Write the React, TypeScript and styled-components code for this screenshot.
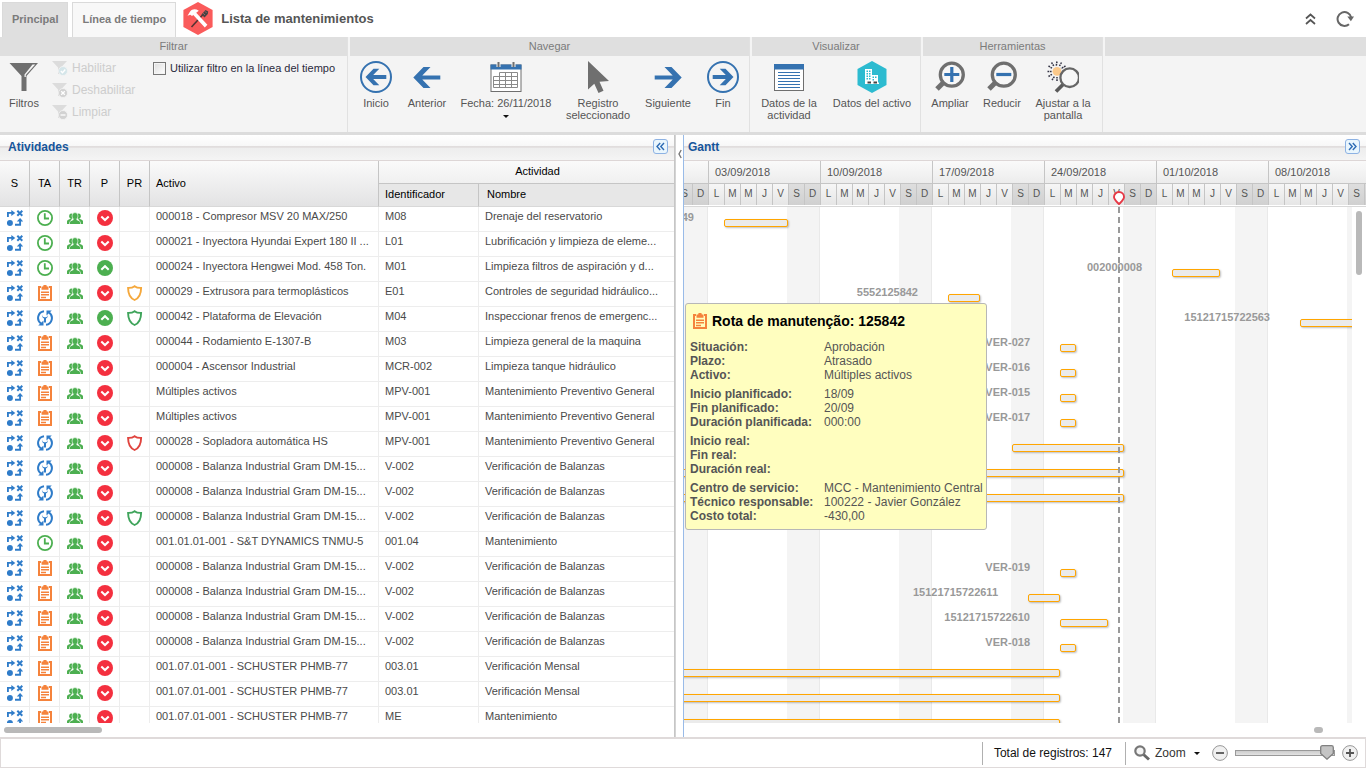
import React from "react";
import styled, { createGlobalStyle, css } from "styled-components";

const BLUE = "#3572b0";
const GREY = "#6f6f6f";
const DAY = 16;

const GlobalStyle = createGlobalStyle`
  *, *::before, *::after { box-sizing: border-box; }
  body {
    margin: 0;
    background: #fff;
    color: #444;
    font: 11px/12px "Liberation Sans", Arial, sans-serif;
  }
  button, input { font: inherit; color: inherit; margin: 0; }
  button { padding: 0; border: 0; background: none; cursor: pointer; }
  svg { display: block; flex: none; }
`;

/* ---------- page frame ---------- */

const Page = styled.div`
  display: flex;
  flex-direction: column;
  height: 100vh;
  overflow: hidden;
`;

const TopBar = styled.header`
  display: flex;
  align-items: flex-start;
  height: 37px;
  padding: 2px 12px 0 2px;
`;

const Tab = styled.button<{ $active?: boolean }>`
  height: 35px;
  margin-right: 4px;
  padding: 0 9px 2px;
  border: 1px solid #dadada;
  border-bottom: 0;
  background: ${(p) => (p.$active ? "#dfdfdf" : "#f8f8f8")};
  color: #7b7b7b;
  font-weight: bold;
`;

const PageTitle = styled.h1`
  display: flex;
  align-items: center;
  gap: 8px;
  height: 33px;
  margin: 0 auto 0 3px;
  color: #555;
  font-size: 13px;
  font-weight: bold;
`;

const TopActions = styled.div`
  display: flex;
  align-items: center;
  gap: 20px;
  height: 33px;
`;

/* ---------- ribbon ---------- */

const Ribbon = styled.div`
  display: flex;
  height: 98px;
  flex: none;
  border-bottom: 3px solid #dcdcdc;
  background: #f4f4f4;
`;

const Group = styled.section<{ $width?: number }>`
  display: flex;
  flex-direction: column;
  margin-right: ${(p) => (p.$width ? "2px" : "0")};
  border-right: ${(p) => (p.$width ? "1px solid #e1e1e1" : "0")};
  ${(p) => (p.$width ? css`flex: 0 0 ${p.$width}px;` : css`flex: 1;`)}
`;

const GroupTitle = styled.h2`
  height: 19px;
  margin: 0;
  background: #dfdfdf;
  color: #7b7b7b;
  font-size: 11px;
  font-weight: normal;
  line-height: 19px;
  text-align: center;
`;

const GroupBody = styled.div`
  display: flex;
  align-items: flex-start;
  padding-top: 1px;
`;

const Tool = styled.button<{ $width: number }>`
  display: flex;
  flex-direction: column;
  align-items: center;
  width: ${(p) => p.$width}px;
  padding-top: 4px;
  color: #555;
  text-align: center;
  line-height: 12px;
`;

const ToolLabel = styled.span`
  margin-top: 4px;
  white-space: pre;
`;

const Caret = styled.span`
  margin-top: 6px;
  border: 3px solid transparent;
  border-top-color: #111;
  border-bottom: 0;
`;

const FilterList = styled.div`
  display: flex;
  flex-direction: column;
  width: 105px;
  padding: 0 0 0 4px;
`;

const FilterOption = styled.button`
  display: flex;
  align-items: center;
  gap: 4px;
  height: 22px;
  color: #cdcdcd;
  font-size: 12px;
  cursor: default;
`;

const CheckLabel = styled.label`
  display: flex;
  align-items: center;
  gap: 4px;
  height: 22px;
  color: #2b2b3c;
`;

const CheckBox = styled.input`
  appearance: none;
  width: 13px;
  height: 13px;
  border: 1px solid #777;
  background: linear-gradient(135deg, #ddd, #fff);
  box-shadow: inset 0 0 0 1px #f4f4f4;
`;

/* ---------- panels ---------- */

const Workspace = styled.main`
  display: flex;
  flex: 1;
  min-height: 0;
`;

const Panel = styled.section<{ $share: number; $gantt?: boolean }>`
  position: relative;
  display: flex;
  flex-direction: column;
  flex: ${(p) => p.$share} 1 0;
  min-width: 0;
  border-right: ${(p) => (p.$gantt ? "0" : "1px solid #c6c6c6")};
  border-left: ${(p) => (p.$gantt ? "1px solid #99bbe8" : "0")};
`;

const PanelHeader = styled.div<{ $left: number }>`
  display: flex;
  justify-content: space-between;
  align-items: center;
  height: 26px;
  flex: none;
  padding: 0 6px 2px ${(p) => p.$left}px;
  border-bottom: 1px solid #ddd6d6;
  background: linear-gradient(#fff 0, #f7f7f7 11px, #dfdbdb 11px, #e6e3e3 13px, #ededed 13px, #f4f4f4 25px);
`;

const PanelTitle = styled.h2`
  margin: 0;
  color: #15559b;
  font-size: 12px;
  font-weight: bold;
`;

const FoldButton = styled.button`
  display: flex;
  align-items: center;
  justify-content: center;
  width: 15px;
  height: 15px;
  border: 1px solid #8db2e3;
  border-radius: 3px;
  background: #eaf6fd;
`;

const Splitter = styled.div`
  display: flex;
  flex: 0 0 8px;
  justify-content: flex-start;
  padding: 14px 0 0 2px;
  border-left: 1px solid #d4d4d4;
  background: #fff;
`;

const PanelBody = styled.div`
  flex: 1;
  min-height: 0;
  overflow: hidden;
`;

const ScrollTrack = styled.div<{ $end?: boolean }>`
  display: flex;
  justify-content: ${(p) => (p.$end ? "flex-end" : "flex-start")};
  height: 14px;
  flex: none;
  padding: 4px ${(p) => (p.$end ? "43px" : "4px")} 4px 4px;
`;

const ScrollThumb = styled.div<{ $w: number; $h: number }>`
  width: ${(p) => p.$w}px;
  height: ${(p) => p.$h}px;
  border-radius: 3px;
  background: #b9b9b9;
`;

/* ---------- activity table ---------- */

const Table = styled.table`
  width: 100%;
  table-layout: fixed;
  border-collapse: separate;
  border-spacing: 0;
`;

const HeadCell = styled.th<{ $kind?: "top" | "sub"; $left?: number; $last?: boolean }>`
  height: ${(p) => (p.$kind ? 23 : 46)}px;
  padding: 0 0 2px ${(p) => p.$left ?? 0}px;
  border-right: ${(p) => (p.$last ? "0" : "1px solid #c5c5c5")};
  border-bottom: 1px solid ${(p) => (p.$kind === "top" ? "#c5c5c5" : "#d8d8d8")};
  background: ${(p) =>
    p.$kind === "sub" ? "#e7e7e7" : p.$kind === "top" ? "linear-gradient(#fafafa, #f0f0f0)" : "linear-gradient(#fafafa, #e3e3e4)"};
  color: #000;
  font-weight: normal;
  text-align: ${(p) => (p.$left && p.$kind !== "top" ? "left" : "center")};
`;

const Row = styled.tr`
  height: 25px;
`;

const IconCell = styled.td`
  padding: 3px 0 0 7px;
  border-right: 1px solid #ededed;
  border-bottom: 1px solid #ededed;
  vertical-align: top;
`;

const TextCell = styled.td`
  padding: 3px 0 0 6px;
  border-right: 1px solid #ededed;
  border-bottom: 1px solid #ededed;
  color: #4a4a4a;
  overflow: hidden;
  vertical-align: top;
  white-space: nowrap;
  &:last-child { border-right: 0; }
`;

/* ---------- gantt ---------- */

const Scale = styled.div`
  flex: none;
  height: 46px;
  overflow: hidden;
  border-bottom: 1px solid #d8d8d8;
`;

const ScaleRow = styled.div`
  position: relative;
  display: flex;
  height: 23px;
  width: max-content;
  margin-left: -7px;
`;

const WeekCell = styled.div<{ $days: number }>`
  width: ${(p) => p.$days * DAY}px;
  padding: 5px 0 0 6px;
  border-right: 1px solid #c5c5c5;
  border-bottom: 1px solid #c5c5c5;
  background: linear-gradient(#fafafa, #ececec);
  color: #555;
`;

const DayCell = styled.div<{ $weekend: boolean }>`
  width: ${DAY}px;
  height: 21px;
  border-right: 1px solid #c5c5c5;
  background: ${(p) => (p.$weekend ? "linear-gradient(#dedede, #d0d0d0)" : "linear-gradient(#f6f6f6, #e6e6e6)")};
  color: #555;
  font-size: 10px;
  line-height: 20px;
  text-align: center;
`;

const TodayPin = styled.svg`
  position: absolute;
  top: 7px;
`;

const ChartArea = styled.div`
  display: flex;
  flex: 1;
  min-height: 0;
`;

const ChartClip = styled.div`
  flex: 1;
  min-width: 0;
  overflow: hidden;
`;

const Canvas = styled.div`
  position: relative;
  height: 100%;
  margin-left: -8px;
  background: repeating-linear-gradient(90deg, #f4f4f4 0 31px, #e9e9e9 31px 32px, #fff 32px 111px, #f4f4f4 111px 112px);
`;

const Lane = styled.div`
  position: relative;
  height: 25px;
`;

const Bar = styled.div`
  position: absolute;
  top: 12px;
  height: 8px;
  border: 1px solid #ffa500;
  border-radius: 2px;
  background: #ebebeb;
  box-shadow: 1px 1px 2px rgba(0, 0, 0, 0.25);
`;

const BarLabel = styled.span`
  position: absolute;
  top: -9px;
  right: 100%;
  margin-right: 31px;
  color: #999;
  font-weight: bold;
  white-space: nowrap;
`;

const TodayLine = styled.div`
  position: absolute;
  top: 0;
  bottom: 0;
  width: 2px;
  background: repeating-linear-gradient(#999 0 6px, transparent 6px 10px);
`;

const SideScroll = styled.div`
  flex: 0 0 14px;
  padding: 4px;
`;

const Tooltip = styled.div`
  position: absolute;
  top: 168px;
  left: 1px;
  width: 302px;
  height: 227px;
  padding: 9px 0 0 4px;
  border: 1px solid #b7b7b7;
  border-radius: 3px;
  background: #fffebf;
  font-size: 12px;
  line-height: 14px;
`;

const TooltipTitle = styled.h3`
  display: flex;
  align-items: center;
  gap: 4px;
  height: 16px;
  margin: 0 0 11px 2px;
  color: #000;
  font-size: 14px;
`;

const Facts = styled.dl`
  display: grid;
  grid-template-columns: 134px 1fr;
  margin: 0 0 5px;
  color: #555;
  white-space: nowrap;
  dt { font-weight: bold; }
  dd { margin: 0; }
`;

/* ---------- status bar ---------- */

const StatusBar = styled.footer`
  display: flex;
  flex: none;
  align-items: center;
  justify-content: flex-end;
  height: 31px;
  padding-right: 7px;
  border: 1px solid #dfdada;
  border-top-width: 2px;
  color: #111;
  font-size: 12px;
`;

const StatusBlock = styled.div`
  display: flex;
  align-items: center;
  height: 23px;
  padding: 0 13px 0 11px;
  border-left: 1px solid #b0b0b0;
`;

const ZoomBlock = styled(StatusBlock)`
  padding: 0 0 0 8px;
`;

const ZoomMenu = styled.button`
  display: flex;
  align-items: center;
  gap: 5px;
  width: 78px;
  color: #333;
`;

const ZoomCaret = styled.span`
  margin-left: 3px;
  border: 3px solid transparent;
  border-top-color: #111;
  border-bottom: 0;
`;

const Slider = styled.input`
  appearance: none;
  width: 100px;
  height: 16px;
  margin: 0 7px;
  background: none;
  &::-webkit-slider-runnable-track {
    height: 6px;
    border: 1px solid #999;
    background: linear-gradient(#ccc, #e2e2e2);
  }
  &::-webkit-slider-thumb {
    appearance: none;
    width: 14px;
    height: 15px;
    margin-top: -6px;
    background: url("data:image/svg+xml,%3Csvg xmlns='http://www.w3.org/2000/svg' viewBox='0 0 14 15'%3E%3Cpath d='M2.5.7h9q1.8 0 1.8 1.8v6L7 14.2.7 8.500v-6Q.7.7 2.500.7z' fill='%23c4c4c4' stroke='%23808080' stroke-width='1.300'/%3E%3C/svg%3E") no-repeat;
  }
`;

/* ---------- icons ---------- */

const FlowIcon = () => (
  <svg width="16" height="16" viewBox="0 0 16 16" fill="none" stroke="#2f7cc9" strokeWidth="1.9">
    <path d="M.9 7V2.900H5" />
    <path d="M4.300 0l4 2.900-4 3z" fill="#2f7cc9" stroke="none" />
    <path d="M10.300 .8l5 5M15.300 .8l-5 5" strokeWidth="2" />
    <circle cx="2.900" cy="13" r="3" fill="#2f7cc9" stroke="none" />
    <path d="M8 14.700h5.100V11" />
    <path d="M9.800 11.600l3.300-3.700 3.100 3.700z" fill="#2f7cc9" stroke="none" />
  </svg>
);

const ClockIcon = () => (
  <svg width="16" height="16" viewBox="0 0 16 16" fill="none" stroke="#4caf50">
    <circle cx="8" cy="8" r="7.100" strokeWidth="1.800" />
    <path d="M7.800 3.200v5.300h4.200" strokeWidth="1.800" />
  </svg>
);

const ClipboardIcon = () => (
  <svg width="16" height="16" viewBox="0 0 16 16" fill="none" stroke="#f5833c">
    <path d="M4 2H2v13h12V2h-2" strokeWidth="2" />
    <path d="M4.500 1.500h1.700a1.800 1.800 0 0 1 3.600 0h1.700v3.300h-7z" fill="#f5833c" stroke="none" />
    <path d="M4 7.200h8M4 9.800h8M4 12.400h5" strokeWidth="1.500" />
  </svg>
);

const ServiceIcon = () => (
  <svg width="16" height="16" viewBox="0 0 16 16" fill="none" stroke="#2f7cc9" strokeWidth="2">
    <path d="M7 1.200A6.800 6.800 0 0 0 4 13.500" />
    <path d="M9 14.800A6.800 6.800 0 0 0 12 2.500" />
    <path d="M1.200 15.600h5.300v-5.200z" fill="#2f7cc9" stroke="none" />
    <path d="M14.800.4H9.500v5.200z" fill="#2f7cc9" stroke="none" />
    <path d="M5.200 4.300c-.9 2 .3 3.600 1.800 4.100v4.200h2V8.400c1.500-.5 2.700-2.100 1.800-4.100v2L9 7.300H7L5.200 6.300z" fill="#2f7cc9" stroke="none" />
  </svg>
);

const TeamIcon = () => (
  <svg width="16" height="16" viewBox="0 0 16 16" fill="#4caf50">
    <ellipse cx="4.300" cy="6.200" rx="2.100" ry="2.700" />
    <ellipse cx="11.700" cy="6.200" rx="2.100" ry="2.700" />
    <path d="M0 14v-2.400c0-1.200.9-1.600 2-2l1.300-.8H5l-1.500 1.900c-.9.500-1.200 1.600-1.200 3.300z" />
    <path d="M16 14v-2.400c0-1.200-.9-1.600-2-2l-1.300-.8H11l1.500 1.900c.9.500 1.200 1.600 1.200 3.300z" />
    <ellipse cx="8" cy="6" rx="3" ry="3.500" stroke="#fff" strokeWidth=".6" />
    <path d="M6.500 8.500h3V10l2.400 1c.9.400 1.200 1 1.200 3H2.900c0-2 .3-2.600 1.200-3l2.400-1z" />
  </svg>
);

const PriorityIcon = ({ up }: { up?: boolean }) => (
  <svg width="16" height="16" viewBox="0 0 16 16" fill="none">
    <circle cx="8" cy="8" r="8" fill={up ? "#4caf50" : "#f4303f"} />
    <path d={up ? "M4.300 9.700L8 6.300l3.700 3.400" : "M4.300 6.600L8 10l3.700-3.400"} stroke="#fff" strokeWidth="2.100" />
  </svg>
);

const ShieldIcon = ({ color }: { color: string }) => (
  <svg width="16" height="16" viewBox="0 0 16 16" fill="none" stroke={color} strokeWidth="1.900">
    <path d="M7.600 1.200C5.900 2.500 3.500 3 1.100 2.900c0 6 1.200 9.700 6.500 12.100 5.300-2.400 6.500-6.100 6.500-12.100C11.700 3 9.300 2.500 7.600 1.200z" />
  </svg>
);

const HammerIcon = () => (
  <svg width="30" height="33" viewBox="0 0 30 33">
    <path d="M15 0l14.600 8v17L15 33 .4 25V8z" fill="#fa5b5b" />
    <path d="M8.500 25L20 12.500" stroke="#533" strokeWidth="1.600" />
    <path d="M18.500 12.500l4-4.500 2.700 1.500-.4 2.500-3.300 3.500z" fill="#444" />
    <path d="M20.200 11.200l1.700 1.700M22 9.400l1.500 1.500" stroke="#c66" strokeWidth=".8" />
    <path d="M4.500 13.800l2.800-1 1.700 1.200 1.300-1L21.800 25.500l2.600-2.800L13.200 10.800l2.600-2c-3.300-2.200-6.700-1.800-8.700.6z" fill="#fff" />
  </svg>
);

const CollapseIcon = () => (
  <svg width="11" height="12" viewBox="0 0 11 12" fill="none" stroke="#555" strokeWidth="1.700">
    <path d="M1 5.500l4.500-4 4.500 4M1 11l4.500-4 4.500 4" />
  </svg>
);

const RefreshIcon = () => (
  <svg width="18" height="18" viewBox="0 0 18 18" fill="none" stroke="#666" strokeWidth="2">
    <path d="M15.200 7.500A6.900 6.900 0 1 0 13 14.200" />
    <path d="M11.300 6.600h6.700l-3.100 4.600z" fill="#666" stroke="none" />
  </svg>
);

const FunnelIcon = () => (
  <svg width="32" height="32" viewBox="0 0 32 32">
    <path d="M1.500 2h28.500L18.500 15v15h-5V15z" fill={GREY} />
    <path d="M24.500 3.500h2.700L17.800 14v2h-1.300v-2.500z" fill="#f4f4f4" />
  </svg>
);

const MiniFunnel = ({ kind }: { kind: "on" | "off" | "clear" }) => (
  <svg width="16" height="16" viewBox="0 0 16 16" fill="none">
    <path d="M0 1h15L9 7.500V14H6V7.500z" fill="#dcdcdc" />
    <circle cx="11" cy="11" r="4.500" fill={kind === "on" ? "#d5e6ea" : "#d2d2d2"} stroke="#f4f4f4" strokeWidth=".8" />
    <path
      d={kind === "on" ? "M8.800 11l1.700 1.700 2.800-3.200" : kind === "off" ? "M9.200 9.200l3.600 3.600M12.800 9.200l-3.600 3.600" : "M8.500 11h5"}
      stroke="#fff"
      strokeWidth="1.300"
    />
  </svg>
);

const ArrowIcon = ({ right, ring }: { right?: boolean; ring?: boolean }) => (
  <svg width="32" height="32" viewBox="0 0 32 32" fill="none" stroke={BLUE}>
    {ring && <circle cx="16" cy="16" r="15" strokeWidth="2" />}
    <g transform={right ? "matrix(-1 0 0 1 32 0)" : undefined}>
      {ring ? (
        <path d="M5.500 16L13.500 7.700h5.800L13.200 14H26.300v4H13.200l6.100 6.300h-5.800z" fill={BLUE} stroke="none" />
      ) : (
        <path d="M2.300 16.500L12.500 6h7L11.300 14.500H29.300v4H11.300L19.500 27h-7z" fill={BLUE} stroke="none" />
      )}
    </g>
  </svg>
);

const CalendarIcon = () => (
  <svg width="32" height="32" viewBox="0 0 32 32" fill="none">
    <rect x="1" y="4" width="30" height="26.500" fill="#fff" stroke={GREY} />
    <path d="M.5 3.500h31v5H.5z" fill={BLUE} />
    <path d="M8.500 1v5M23.500 1v5" stroke="#f4f4f4" strokeWidth="4" />
    <path d="M8.500 1v5M23.500 1v5" stroke={GREY} strokeWidth="2" />
    <path d="M9.500 11.500h18v15h-24v-11h24M3.500 19.500h24M3.500 23.500h24M9.500 11.500v15M15.500 11.500v15M21.500 11.500v15" stroke="#8a8a8a" />
  </svg>
);

const PointerIcon = () => (
  <svg width="32" height="32" viewBox="0 0 32 32">
    <path d="M6 0v28.500l6.300-5.800 4.200 9.300 5-2.300-4-9L27 20z" fill={GREY} />
  </svg>
);

const SheetIcon = () => (
  <svg width="32" height="32" viewBox="0 0 32 32" fill="none">
    <rect x="1.500" y="3.500" width="29" height="26" fill="#fff" stroke={GREY} />
    <path d="M1 3h30v5.500H1z" fill={BLUE} />
    <path d="M5 11.500h22M5 14.500h22M5 17.500h22M5 20.500h22M5 23.500h22M5 26.500h22" stroke={BLUE} />
  </svg>
);

const AssetIcon = () => (
  <svg width="30" height="32" viewBox="0 0 30 32">
    <path d="M15 0l14.500 8v16L15 32 .5 24V8z" fill="#2dbbd0" />
    <path d="M8 8h7v6h6v7.500h1V23H8z" fill="#fff" />
    <path d="M9.500 9.500h1.500v1.500H9.500zM12 9.500h1.500v1.500H12zM9.500 12h1.500v1.500H9.500zM12 12h1.500v1.500H12zM9.500 14.500h1.500V16H9.500zM12 14.500h1.500V16H12zM9.500 17h1.500v1.500H9.500zM12 17h1.500v1.500H12zM15.500 15.500H17V17h-1.500zM18 15.500h1.500V17H18zM15.500 18H17v1.500h-1.500z" fill="#2dbbd0" />
    <path d="M10.500 20.500h3.500v2h-3.500zM16.500 20.500H20v2h-3.500z" fill="#444" />
  </svg>
);

const MagnifierIcon = ({ kind }: { kind: "plus" | "minus" }) => (
  <svg width="32" height="32" viewBox="0 0 32 32" fill="none">
    <path d="M9.500 21.500l-6.500 6.500" stroke={GREY} strokeWidth="5" />
    <circle cx="17.800" cy="13.700" r="11.500" fill="#f7f7f7" stroke={GREY} strokeWidth="3.300" />
    <path d={kind === "plus" ? "M17.800 6v15M10.300 13.500h15" : "M10.300 13.500h15"} stroke={BLUE} strokeWidth="3.200" />
  </svg>
);

const FitIcon = () => (
  <svg width="32" height="32" viewBox="0 0 32 32" fill="none">
    <path
      d="M10 .5l-.8 4.500M4.500 1.500L6.800 5M14.500 1.500L12.500 5M1.500 5l4 2.500M18.500 5L14 7.500M.5 10.500h4.200M1.500 15.500L5.500 13M5 19l2.500-3.500M10 20v-4"
      stroke="#333344"
      strokeWidth="1.500"
      strokeDasharray="1.700 .7"
    />
    <circle cx="10" cy="10.300" r="4.400" fill="#fbc98b" />
    <path d="M17 22.500L9 30.500" stroke="#5a5a5a" strokeWidth="3.800" />
    <circle cx="22.700" cy="16.700" r="9.300" fill="#f7f7f7" stroke="#666" strokeWidth="2.300" />
  </svg>
);

const SmallMagnifier = () => (
  <svg width="16" height="16" viewBox="0 0 16 16" fill="none">
    <path d="M9.500 9.500l5.500 5" stroke="#666" strokeWidth="3" />
    <circle cx="6" cy="6" r="4.700" fill="#f4f4f4" stroke="#777" strokeWidth="2.200" />
  </svg>
);

const RoundButtonIcon = ({ plus }: { plus?: boolean }) => (
  <svg width="16" height="16" viewBox="0 0 16 16" fill="none">
    <circle cx="8" cy="8" r="7.400" fill="#f0f0f0" stroke="#999" />
    <path d={plus ? "M4 8h8M8 4v8" : "M4 8h8"} stroke="#555" strokeWidth="1.800" />
  </svg>
);

const FoldIcon = ({ right }: { right?: boolean }) => (
  <svg width="9" height="9" viewBox="0 0 9 9" fill="none" stroke="#2e6cb5" strokeWidth="1.400">
    <path d={right ? "M1 1l3.200 3.500L1 8M4.800 1L8 4.500 4.800 8" : "M4.200 1L1 4.500 4.200 8M8 1L4.800 4.500 8 8"} />
  </svg>
);

/* ---------- data ---------- */

type Kind = "clock" | "board" | "service";
type Activity = {
  kind: Kind;
  up?: boolean;
  shield?: string;
  asset: string;
  id: string;
  name: string;
  bar?: { label?: string; start: number; days: number };
};

const BALANCE = "000008 - Balanza Industrial Gram DM-15...";
const CHECK = "Verificación de Balanzas";
const SCHUSTER = "001.07.01-001 - SCHUSTER PHMB-77";

const activities: Activity[] = [
  { kind: "clock", asset: "000018 - Compresor MSV 20 MAX/250", id: "M08", name: "Drenaje del reservatorio", bar: { label: "15121715722549", start: 3, days: 4 } },
  { kind: "clock", asset: "000021 - Inyectora Hyundai Expert 180 II ...", id: "L01", name: "Lubrificación y limpieza de eleme..." },
  { kind: "clock", up: true, asset: "000024 - Inyectora Hengwei Mod. 458 Ton.", id: "M01", name: "Limpieza filtros de aspiración y d...", bar: { label: "002000008", start: 31, days: 3 } },
  { kind: "board", shield: "#f5a83c", asset: "000029 - Extrusora para termoplásticos", id: "E01", name: "Controles de seguridad hidráulico...", bar: { label: "5552125842", start: 17, days: 2 } },
  { kind: "service", up: true, shield: "#3fa45b", asset: "000042 - Plataforma de Elevación", id: "M04", name: "Inspeccionar frenos de emergenc...", bar: { label: "15121715722563", start: 39, days: 6 } },
  { kind: "board", asset: "000044 - Rodamiento E-1307-B", id: "M03", name: "Limpieza general de la maquina", bar: { label: "VER-027", start: 24, days: 1 } },
  { kind: "board", asset: "000004 - Ascensor Industrial", id: "MCR-002", name: "Limpieza tanque hidráulico", bar: { label: "VER-016", start: 24, days: 1 } },
  { kind: "board", asset: "Múltiples activos", id: "MPV-001", name: "Mantenimiento Preventivo General", bar: { label: "VER-015", start: 24, days: 1 } },
  { kind: "board", asset: "Múltiples activos", id: "MPV-001", name: "Mantenimiento Preventivo General", bar: { label: "VER-017", start: 24, days: 1 } },
  { kind: "service", shield: "#e0443e", asset: "000028 - Sopladora automática HS", id: "MPV-001", name: "Mantenimiento Preventivo General", bar: { start: 21, days: 7 } },
  { kind: "service", asset: BALANCE, id: "V-002", name: CHECK, bar: { start: -2, days: 30 } },
  { kind: "service", asset: BALANCE, id: "V-002", name: CHECK, bar: { start: -2, days: 30 } },
  { kind: "service", shield: "#3fa45b", asset: BALANCE, id: "V-002", name: CHECK },
  { kind: "clock", asset: "001.01.01-001 - S&T DYNAMICS TNMU-5", id: "001.04", name: "Mantenimiento" },
  { kind: "board", asset: BALANCE, id: "V-002", name: CHECK, bar: { label: "VER-019", start: 24, days: 1 } },
  { kind: "board", asset: BALANCE, id: "V-002", name: CHECK, bar: { label: "15121715722611", start: 22, days: 2 } },
  { kind: "board", asset: BALANCE, id: "V-002", name: CHECK, bar: { label: "15121715722610", start: 24, days: 3 } },
  { kind: "board", asset: BALANCE, id: "V-002", name: CHECK, bar: { label: "VER-018", start: 24, days: 1 } },
  { kind: "board", asset: SCHUSTER, id: "003.01", name: "Verificación Mensal", bar: { start: -2, days: 26 } },
  { kind: "board", asset: SCHUSTER, id: "003.01", name: "Verificación Mensal", bar: { start: -2, days: 26 } },
  { kind: "board", asset: SCHUSTER, id: "ME", name: "Mantenimiento", bar: { start: -2, days: 26 } },
];

const weeks = ["03/09/2018", "10/09/2018", "17/09/2018", "24/09/2018", "01/10/2018", "08/10/2018"];
const dayLetters = ["S", "D", ...weeks.flatMap(() => ["L", "M", "M", "J", "V", "S", "D"])];
const todayOffset = 442;

const facts: [string, string][][] = [
  [["Situación:", "Aprobación"], ["Plazo:", "Atrasado"], ["Activo:", "Múltiples activos"]],
  [["Inicio planificado:", "18/09"], ["Fin planificado:", "20/09"], ["Duración planificada:", "000:00"]],
  [["Inicio real:", ""], ["Fin real:", ""], ["Duración real:", ""]],
  [["Centro de servicio:", "MCC - Mantenimiento Central"], ["Técnico responsable:", "100222 - Javier González"], ["Costo total:", "-430,00"]],
];

const kindIcons: Record<Kind, React.ReactElement> = {
  clock: <ClockIcon />,
  board: <ClipboardIcon />,
  service: <ServiceIcon />,
};

/* ---------- sections ---------- */

const ToolButton = ({ width, icon, label, menu }: { width: number; icon: React.ReactElement; label: string; menu?: boolean }) => (
  <Tool type="button" $width={width}>
    {icon}
    <ToolLabel>{label}</ToolLabel>
    {menu && <Caret />}
  </Tool>
);

const RibbonBar = () => (
  <Ribbon>
    <Group $width={348}>
      <GroupTitle>Filtrar</GroupTitle>
      <GroupBody>
        <ToolButton width={48} icon={<FunnelIcon />} label="Filtros" />
        <FilterList>
          <FilterOption type="button" disabled><MiniFunnel kind="on" />Habilitar</FilterOption>
          <FilterOption type="button" disabled><MiniFunnel kind="off" />Deshabilitar</FilterOption>
          <FilterOption type="button" disabled><MiniFunnel kind="clear" />Limpiar</FilterOption>
        </FilterList>
        <CheckLabel>
          <CheckBox type="checkbox" />
          Utilizar filtro en la línea del tiempo
        </CheckLabel>
      </GroupBody>
    </Group>
    <Group $width={400}>
      <GroupTitle>Navegar</GroupTitle>
      <GroupBody>
        <ToolButton width={52} icon={<ArrowIcon ring />} label="Inicio" />
        <ToolButton width={50} icon={<ArrowIcon />} label="Anterior" />
        <ToolButton width={108} icon={<CalendarIcon />} label="Fecha: 26/11/2018" menu />
        <ToolButton width={76} icon={<PointerIcon />} label={"Registro\nseleccionado"} />
        <ToolButton width={64} icon={<ArrowIcon right />} label="Siguiente" />
        <ToolButton width={46} icon={<ArrowIcon right ring />} label="Fin" />
      </GroupBody>
    </Group>
    <Group $width={169}>
      <GroupTitle>Visualizar</GroupTitle>
      <GroupBody>
        <ToolButton width={74} icon={<SheetIcon />} label={"Datos de la\nactividad"} />
        <ToolButton width={92} icon={<AssetIcon />} label="Datos del activo" />
      </GroupBody>
    </Group>
    <Group $width={180}>
      <GroupTitle>Herramientas</GroupTitle>
      <GroupBody>
        <ToolButton width={54} icon={<MagnifierIcon kind="plus" />} label="Ampliar" />
        <ToolButton width={50} icon={<MagnifierIcon kind="minus" />} label="Reducir" />
        <ToolButton width={72} icon={<FitIcon />} label={"Ajustar a la\npantalla"} />
      </GroupBody>
    </Group>
    <Group>
      <GroupTitle />
    </Group>
  </Ribbon>
);

const ActivityTable = () => (
  <Table>
    <colgroup>
      {[30, 30, 30, 30, 30, 229, 100].map((w, i) => (
        <col key={i} width={w} />
      ))}
      <col />
    </colgroup>
    <thead>
      <tr>
        {["S", "TA", "TR", "P", "PR"].map((h) => (
          <HeadCell key={h} rowSpan={2}>{h}</HeadCell>
        ))}
        <HeadCell rowSpan={2} $left={6}>Activo</HeadCell>
        <HeadCell colSpan={2} $kind="top" $left={22} $last>Actividad</HeadCell>
      </tr>
      <tr>
        <HeadCell $kind="sub" $left={6}>Identificador</HeadCell>
        <HeadCell $kind="sub" $left={8} $last>Nombre</HeadCell>
      </tr>
    </thead>
    <tbody>
      {activities.map((a, i) => (
        <Row key={i}>
          <IconCell><FlowIcon /></IconCell>
          <IconCell>{kindIcons[a.kind]}</IconCell>
          <IconCell><TeamIcon /></IconCell>
          <IconCell><PriorityIcon up={a.up} /></IconCell>
          <IconCell>{a.shield && <ShieldIcon color={a.shield} />}</IconCell>
          <TextCell>{a.asset}</TextCell>
          <TextCell>{a.id}</TextCell>
          <TextCell>{a.name}</TextCell>
        </Row>
      ))}
    </tbody>
  </Table>
);

const GanttScale = () => (
  <Scale>
    <ScaleRow>
      <WeekCell $days={2} />
      {weeks.map((w) => (
        <WeekCell key={w} $days={7}>{w}</WeekCell>
      ))}
    </ScaleRow>
    <ScaleRow>
      {dayLetters.map((d, i) => (
        <DayCell key={i} $weekend={d === "S" || d === "D"}>{d}</DayCell>
      ))}
      <TodayPin width="12" height="14" viewBox="0 0 12 14" style={{ left: todayOffset - 6 }}>
        <path d="M6 1a5 5 0 0 1 5 5c0 2.500-2.500 4.500-5 7.200C3.500 10.500 1 8.500 1 6a5 5 0 0 1 5-5z" fill="#fff" stroke="#e63946" strokeWidth="1.900" />
      </TodayPin>
    </ScaleRow>
  </Scale>
);

const RouteTooltip = () => (
  <Tooltip role="tooltip">
    <TooltipTitle>
      <ClipboardIcon />
      Rota de manutenção: 125842
    </TooltipTitle>
    {facts.map((group, i) => (
      <Facts key={i}>
        {group.map(([term, value]) => (
          <React.Fragment key={term}>
            <dt>{term}</dt>
            <dd>{value}</dd>
          </React.Fragment>
        ))}
      </Facts>
    ))}
  </Tooltip>
);

export default function App() {
  return (
    <Page>
      <GlobalStyle />
      <TopBar>
        <Tab type="button" $active>Principal</Tab>
        <Tab type="button">Línea de tiempo</Tab>
        <PageTitle><HammerIcon />Lista de mantenimientos</PageTitle>
        <TopActions>
          <button type="button" aria-label="Contraer"><CollapseIcon /></button>
          <button type="button" aria-label="Actualizar"><RefreshIcon /></button>
        </TopActions>
      </TopBar>
      <RibbonBar />
      <Workspace>
        <Panel $share={675}>
          <PanelHeader $left={8}>
            <PanelTitle>Atividades</PanelTitle>
            <FoldButton type="button" aria-label="Contraer lista"><FoldIcon /></FoldButton>
          </PanelHeader>
          <PanelBody>
            <ActivityTable />
          </PanelBody>
          <ScrollTrack><ScrollThumb $w={98} $h={6} /></ScrollTrack>
        </Panel>
        <Splitter>
          <svg width="4" height="10" viewBox="0 0 4 10" fill="none" stroke="#777" strokeWidth="1.400">
            <path d="M3.200 1L1 5l2.200 4" />
          </svg>
        </Splitter>
        <Panel $share={683} $gantt>
          <PanelHeader $left={4}>
            <PanelTitle>Gantt</PanelTitle>
            <FoldButton type="button" aria-label="Contraer Gantt"><FoldIcon right /></FoldButton>
          </PanelHeader>
          <GanttScale />
          <ChartArea>
            <ChartClip>
              <Canvas>
                {activities.map((a, i) => (
                  <Lane key={i}>
                    {a.bar && (
                      <Bar style={{ left: a.bar.start * DAY, width: a.bar.days * DAY }}>
                        {a.bar.label && <BarLabel>{a.bar.label}</BarLabel>}
                      </Bar>
                    )}
                  </Lane>
                ))}
                <TodayLine style={{ left: todayOffset }} />
              </Canvas>
            </ChartClip>
            <SideScroll><ScrollThumb $w={6} $h={64} /></SideScroll>
          </ChartArea>
          <ScrollTrack $end><ScrollThumb $w={9} $h={6} /></ScrollTrack>
          <RouteTooltip />
        </Panel>
      </Workspace>
      <StatusBar>
        <StatusBlock>Total de registros: 147</StatusBlock>
        <ZoomBlock>
          <ZoomMenu type="button"><SmallMagnifier />Zoom<ZoomCaret /></ZoomMenu>
          <button type="button" aria-label="Alejar"><RoundButtonIcon /></button>
          <Slider type="range" aria-label="Nivel de zoom" defaultValue={100} />
          <button type="button" aria-label="Acercar"><RoundButtonIcon plus /></button>
        </ZoomBlock>
      </StatusBar>
    </Page>
  );
}
